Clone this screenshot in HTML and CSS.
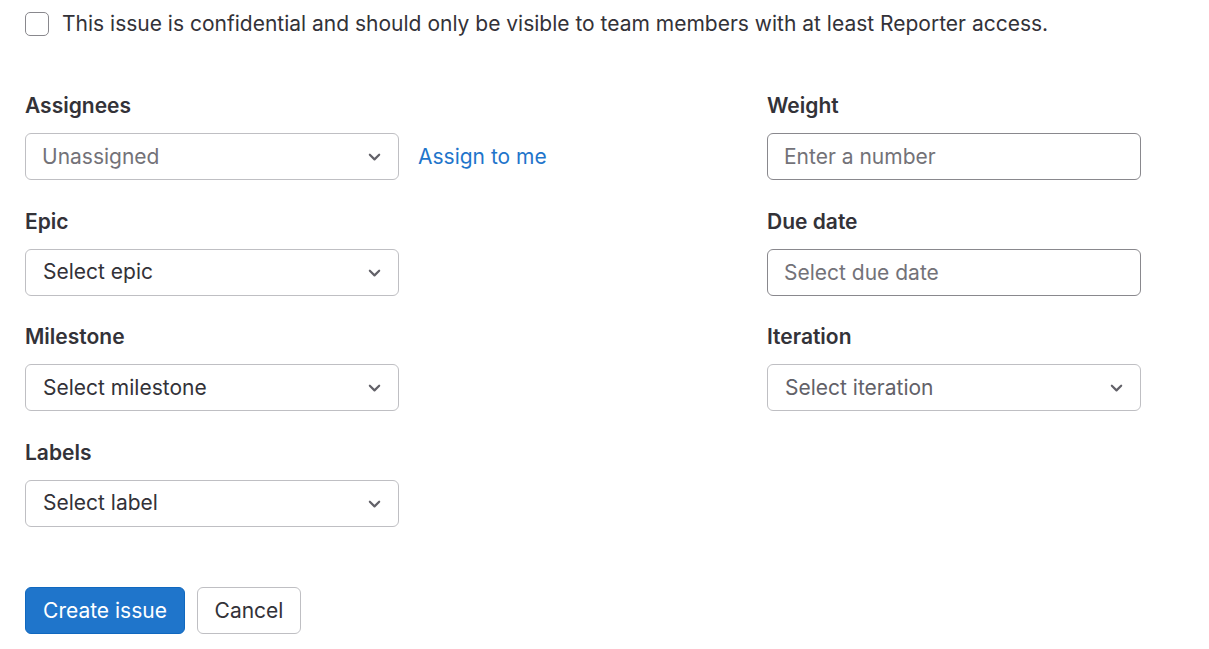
FILE: index.html
```html
<!DOCTYPE html>
<html lang="en">
<head>
<meta charset="utf-8">
<title>New issue</title>
<link rel="stylesheet" href="styles.css">
</head>
<body>
<form class="issue-form">
  <label class="confidential">
    <span class="checkbox"></span>
    <span class="confidential-text">This issue is confidential and should only be visible to team members with at least Reporter access.</span>
  </label>

  <div class="columns">
    <div class="column">
      <div class="field">
        <div class="field-label">Assignees</div>
        <div class="field-row">
          <div class="select placeholder">
            <span>Unassigned</span>
            <svg class="chevron" viewBox="0 0 16 16"><path d="M4.22 6.22a.75.75 0 0 1 1.06 0L8 8.94l2.72-2.72a.75.75 0 1 1 1.06 1.06l-3.25 3.25a.75.75 0 0 1-1.06 0L4.22 7.28a.75.75 0 0 1 0-1.06Z"/></svg>
          </div>
          <a class="assign-me" href="#">Assign to me</a>
        </div>
      </div>
      <div class="field">
        <div class="field-label">Epic</div>
        <div class="select">
          <span>Select epic</span>
          <svg class="chevron" viewBox="0 0 16 16"><path d="M4.22 6.22a.75.75 0 0 1 1.06 0L8 8.94l2.72-2.72a.75.75 0 1 1 1.06 1.06l-3.25 3.25a.75.75 0 0 1-1.06 0L4.22 7.28a.75.75 0 0 1 0-1.06Z"/></svg>
        </div>
      </div>
      <div class="field">
        <div class="field-label">Milestone</div>
        <div class="select">
          <span>Select milestone</span>
          <svg class="chevron" viewBox="0 0 16 16"><path d="M4.22 6.22a.75.75 0 0 1 1.06 0L8 8.94l2.72-2.72a.75.75 0 1 1 1.06 1.06l-3.25 3.25a.75.75 0 0 1-1.06 0L4.22 7.28a.75.75 0 0 1 0-1.06Z"/></svg>
        </div>
      </div>
      <div class="field">
        <div class="field-label">Labels</div>
        <div class="select">
          <span>Select label</span>
          <svg class="chevron" viewBox="0 0 16 16"><path d="M4.22 6.22a.75.75 0 0 1 1.06 0L8 8.94l2.72-2.72a.75.75 0 1 1 1.06 1.06l-3.25 3.25a.75.75 0 0 1-1.06 0L4.22 7.28a.75.75 0 0 1 0-1.06Z"/></svg>
        </div>
      </div>
    </div>

    <div class="column right">
      <div class="field">
        <div class="field-label">Weight</div>
        <input class="text-input" type="text" placeholder="Enter a number">
      </div>
      <div class="field">
        <div class="field-label">Due date</div>
        <input class="text-input" type="text" placeholder="Select due date">
      </div>
      <div class="field">
        <div class="field-label">Iteration</div>
        <div class="select muted">
          <span>Select iteration</span>
          <svg class="chevron" viewBox="0 0 16 16"><path d="M4.22 6.22a.75.75 0 0 1 1.06 0L8 8.94l2.72-2.72a.75.75 0 1 1 1.06 1.06l-3.25 3.25a.75.75 0 0 1-1.06 0L4.22 7.28a.75.75 0 0 1 0-1.06Z"/></svg>
        </div>
      </div>
    </div>
  </div>

  <div class="actions">
    <button type="button" class="btn btn-primary">Create issue</button>
    <button type="button" class="btn btn-default">Cancel</button>
  </div>
</form>
</body>
</html>
```

FILE: styles.css
```css
* { box-sizing: border-box; }

html, body {
  margin: 0;
  padding: 0;
  background: #ffffff;
}

body {
  font-family: Inter, "Noto Sans", "Liberation Sans", sans-serif;
  font-size: 21px;
  line-height: 28px;
  color: #333238;
}

.issue-form {
  padding: 10px 25px 0 25px;
}

.confidential {
  display: flex;
  align-items: center;
  gap: 13px;
  height: 28px;
}

.checkbox {
  width: 24px;
  height: 24px;
  border: 1px solid #89888d;
  border-radius: 5px;
  background: #fff;
  flex: none;
}

.confidential-text {
  color: #333238;
}

.columns {
  display: grid;
  grid-template-columns: 742px 374px;
  margin-top: 54px;
}

.field {
  margin-bottom: 27.5px;
}

.field-label {
  font-size: 21px;
  font-weight: 600;
  line-height: 28px;
  margin-bottom: 13px;
  color: #333238;
}

.field-row {
  display: flex;
  align-items: center;
  gap: 19px;
}

.select {
  width: 374px;
  height: 47px;
  border: 1px solid #bfbfc3;
  border-radius: 6px;
  display: flex;
  align-items: center;
  justify-content: space-between;
  padding: 0 12px 0 17px;
  color: #333238;
  background: #fff;
}

.select.placeholder {
  color: #737278;
  padding-left: 16px;
}

.select.muted {
  color: #626168;
}

.chevron {
  width: 23px;
  height: 23px;
  fill: #626168;
  flex: none;
}

.assign-me {
  color: #1f75cb;
  text-decoration: none;
}

.text-input {
  display: block;
  width: 374px;
  height: 47px;
  border: 1px solid #89888d;
  border-radius: 6px;
  padding: 0 16px;
  font-family: inherit;
  font-size: 21px;
  color: #333238;
  background: #fff;
}

.text-input::placeholder {
  color: #737278;
  opacity: 1;
}

.actions {
  display: flex;
  gap: 12px;
  margin-top: 33px;
}

.btn {
  height: 47px;
  border-radius: 6px;
  font-family: inherit;
  font-size: 21px;
  line-height: 28px;
  padding: 0 12px;
  cursor: pointer;
}

.btn-primary {
  background: #1f75cb;
  border: 1px solid #1068bf;
  color: #ffffff;
  width: 160px;
}

.btn-default {
  background: #ffffff;
  border: 1px solid #bfbfc3;
  color: #333238;
  width: 104px;
}
```
